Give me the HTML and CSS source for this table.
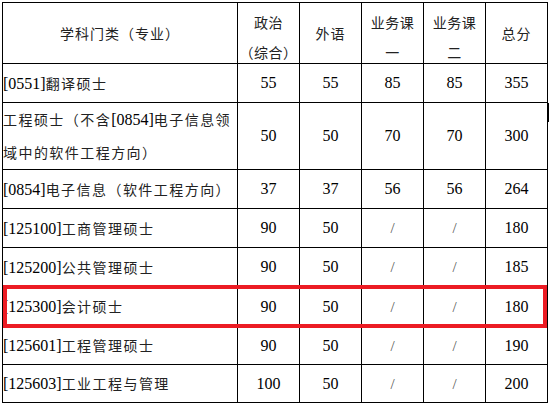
FILE: index.html
```html
<!DOCTYPE html>
<html lang="zh-CN">
<head>
<meta charset="utf-8">
<title>复试分数线</title>
<link rel="stylesheet" href="styles.css">
</head>
<body>
<div class="wrap">
  <table class="score">
    <colgroup>
      <col class="c-name">
      <col class="c-num">
      <col class="c-num">
      <col class="c-num">
      <col class="c-num">
      <col class="c-last">
    </colgroup>
    <tr class="r-head">
      <td class="hd">学科门类（专业）</td>
      <td class="hd two"><span class="stack">政治<br>（综合）</span></td>
      <td class="hd">外语</td>
      <td class="hd two"><span class="stack">业务课<br>一</span></td>
      <td class="hd two"><span class="stack">业务课<br>二</span></td>
      <td class="hd">总分</td>
    </tr>
    <tr class="r39">
      <td class="name"><span class="code">[0551]</span>翻译硕士</td>
      <td class="num">55</td><td class="num">55</td><td class="num">85</td><td class="num">85</td><td class="num">355</td>
    </tr>
    <tr class="r67">
      <td class="name tall">工程硕士（不含<span class="code">[0854]</span>电子信息领<br>域中的软件工程方向）</td>
      <td class="num">50</td><td class="num">50</td><td class="num">70</td><td class="num">70</td><td class="num">300</td>
    </tr>
    <tr class="r39">
      <td class="name"><span class="code">[0854]</span>电子信息（软件工程方向）</td>
      <td class="num">37</td><td class="num">37</td><td class="num">56</td><td class="num">56</td><td class="num">264</td>
    </tr>
    <tr class="r39">
      <td class="name"><span class="code">[125100]</span>工商管理硕士</td>
      <td class="num">90</td><td class="num">50</td><td class="num sl">/</td><td class="num sl">/</td><td class="num">180</td>
    </tr>
    <tr class="r39">
      <td class="name"><span class="code">[125200]</span>公共管理硕士</td>
      <td class="num">90</td><td class="num">50</td><td class="num sl">/</td><td class="num sl">/</td><td class="num">185</td>
    </tr>
    <tr class="r40">
      <td class="name"><span class="code">[125300]</span>会计硕士</td>
      <td class="num">90</td><td class="num">50</td><td class="num sl">/</td><td class="num sl">/</td><td class="num">180</td>
    </tr>
    <tr class="r38">
      <td class="name"><span class="code">[125601]</span>工程管理硕士</td>
      <td class="num">90</td><td class="num">50</td><td class="num sl">/</td><td class="num sl">/</td><td class="num">190</td>
    </tr>
    <tr class="r38">
      <td class="name"><span class="code">[125603]</span>工业工程与管理</td>
      <td class="num">100</td><td class="num">50</td><td class="num sl">/</td><td class="num sl">/</td><td class="num">200</td>
    </tr>
  </table>
  <div class="highlight"></div>
  <div class="edge-mark"></div>
</div>
</body>
</html>
```
FILE: styles.css
```css
html, body {
  margin: 0;
  padding: 0;
  background: #ffffff;
}

.wrap {
  position: relative;
  width: 549px;
  height: 406px;
  overflow: hidden;
}

.score {
  border-collapse: collapse;
  table-layout: fixed;
  width: 546px;
  margin: 2px 0 0 2px;
  font-family: "Noto Sans CJK SC", "Liberation Serif", sans-serif;
  font-size: 14px;
  color: #222;
}

.c-name { width: 235px; }
.c-num { width: 62px; }
.c-last { width: 62px; }

.score td {
  border: 1px solid #000;
  padding: 0;
  vertical-align: middle;
  white-space: nowrap;
  overflow: hidden;
}

.r-head { height: 61px; }
.r39 { height: 39px; }
.r67 { height: 67px; }
.r40 { height: 40px; }
.r38 { height: 38px; }

.hd {
  text-align: center;
  line-height: 20px;
  letter-spacing: 1px;
}

.hd.two {
  letter-spacing: 0.5px;
}

.stack {
  display: block;
  line-height: 30px;
  margin-top: 4px;
  margin-bottom: -4px;
}

.name {
  text-align: left;
  padding-left: 4px;
  letter-spacing: 1.45px;
  line-height: 20px;
}

.name.tall {
  line-height: 33px;
}

.code {
  font-family: "Liberation Serif", serif;
  font-size: 16px;
  letter-spacing: 0;
  color: #000;
}

.num {
  text-align: center;
  font-family: "Liberation Serif", serif;
  font-size: 16px;
  line-height: 20px;
  color: #000;
}

.num.sl {
  color: #555;
  font-size: 15px;
}

.highlight {
  position: absolute;
  left: 3px;
  top: 285px;
  width: 544px;
  height: 43px;
  border: 4px solid #ec1c24;
  box-sizing: border-box;
}

.edge-mark {
  position: absolute;
  left: 547px;
  top: 103px;
  width: 2px;
  height: 19px;
  background: #000;
}
```
